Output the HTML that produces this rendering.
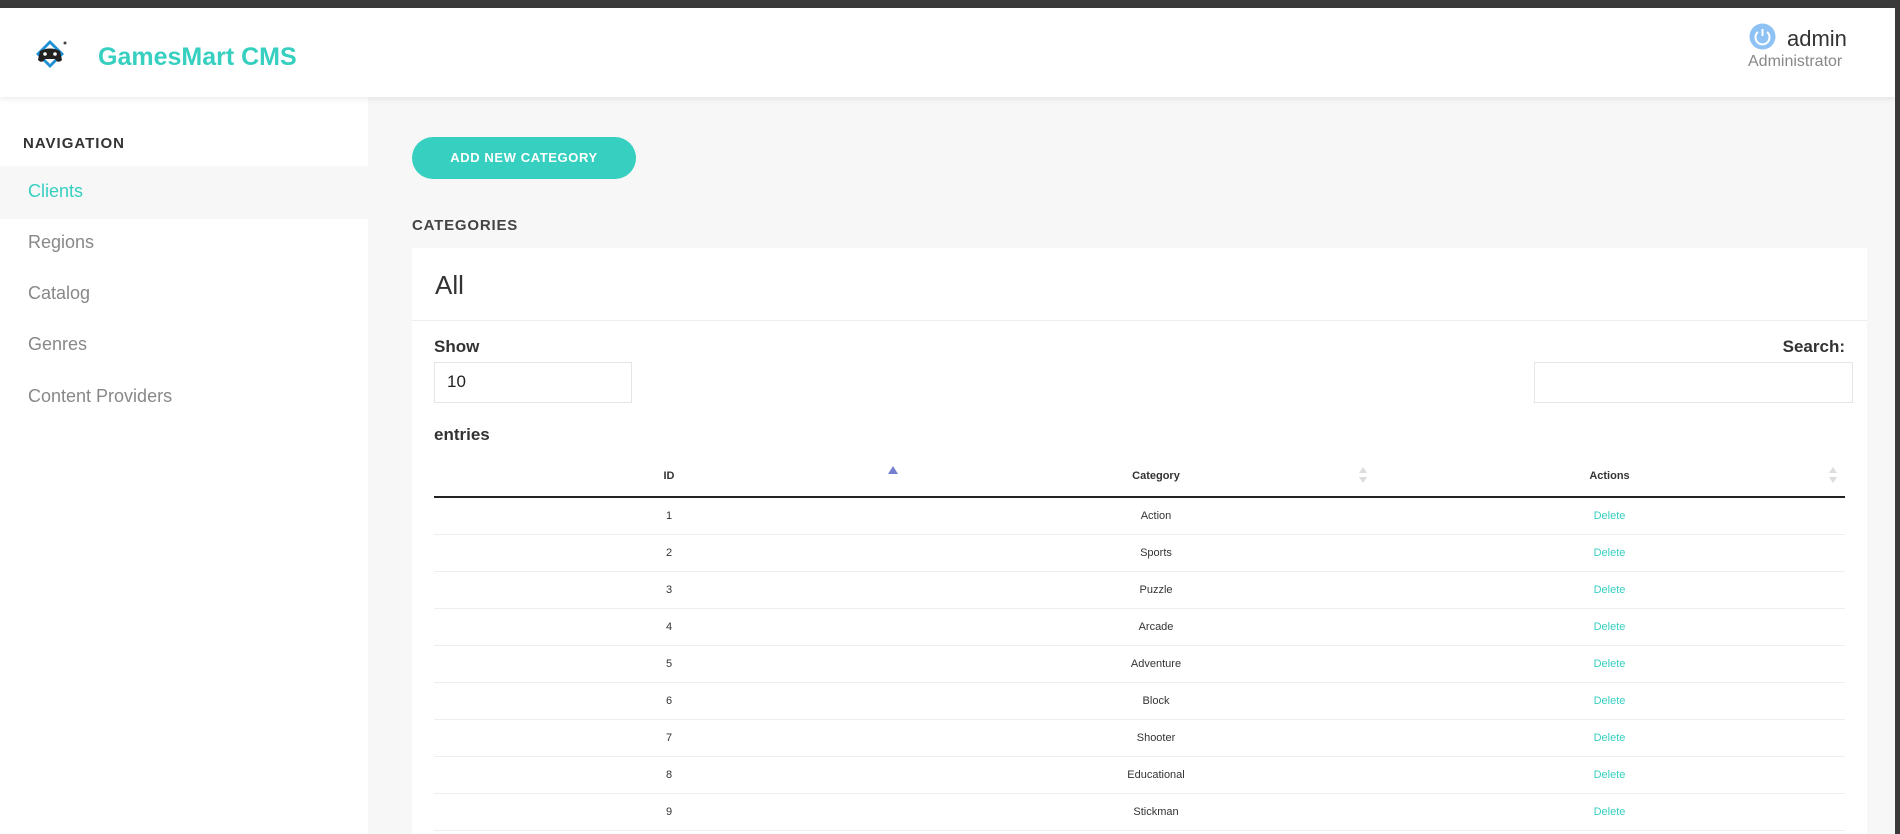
<!DOCTYPE html>
<html style="overflow:hidden;height:834px"><head><meta charset="utf-8"><style>
*{box-sizing:border-box;margin:0;padding:0}
body{width:1900px;height:834px;overflow:hidden;background:#f7f7f7;font-family:"Liberation Sans",Arial,sans-serif;position:relative}
.topbar{position:absolute;left:0;top:0;width:1900px;height:8px;background:#3a3a3a}
.rstrip{position:absolute;right:0;top:0;width:5px;height:834px;background:#3a3a3a;z-index:5}
.header{position:absolute;left:0;top:8px;width:1895px;height:89px;background:#fff;box-shadow:0 2px 6px rgba(0,0,0,.08);z-index:2}
.title{position:absolute;left:98px;top:35px;font-size:25px;font-weight:bold;color:#36cfc0}
.side{position:absolute;left:0;top:97px;width:368px;height:737px;background:#fff}
.nav{position:absolute;left:23px;top:135px;font-size:15px;font-weight:bold;letter-spacing:1px;color:#333}
.item{position:absolute;left:28px;font-size:18px;color:#888}
.btn{position:absolute;left:412px;top:137px;width:224px;height:42px;border-radius:21px;background:#36cfc0;color:#fff;font-size:13px;font-weight:bold;letter-spacing:.6px;text-align:center;line-height:42px}
.card{position:absolute;left:412px;top:248px;width:1455px;height:600px;background:#fff}
table{position:absolute;left:434px;top:456px;width:1411px;border-collapse:collapse;font-size:11px;color:#333;table-layout:fixed}
th{height:41px;border-bottom:2px solid #222;font-weight:bold}
td{height:37px;border-bottom:1px solid #eee;text-align:center}
.a{padding-right:34px}
td.d{color:#36cfc0}
.inp{position:absolute;border:1px solid #e5e5e5;background:#fff}
</style></head><body>
<div class="topbar"></div>
<div class="header">
<svg style="position:absolute;left:35px;top:30px" width="34" height="34" viewBox="0 0 34 34"><path d="M15 2 L29 16 L15 30 L1 16Z" fill="#1f8fd6"/><path d="M15 6 L25 16 L15 26 L5 16Z" fill="#fff"/><path d="M5 13 Q15 8 25 13 L27 22 Q23 26 20 21 L10 21 Q7 26 3 22Z" fill="#222"/><circle cx="10" cy="16" r="1.8" fill="#fff"/><circle cx="20" cy="16" r="1.8" fill="#fff"/><circle cx="30" cy="5" r="1.5" fill="#444"/></svg>
<div class="title">GamesMart CMS</div>
<svg style="position:absolute;left:1749px;top:15px" width="27" height="27" viewBox="0 0 27 27"><circle cx="13.5" cy="13.5" r="13" fill="#8ec2f5"/><path d="M9 9 A7 7 0 1 0 18 9" stroke="#fff" stroke-width="2" fill="none"/><line x1="13.5" y1="6" x2="13.5" y2="13" stroke="#fff" stroke-width="2"/></svg>
<div style="position:absolute;left:1787px;top:18px;font-size:22px;color:#333">admin</div>
<div style="position:absolute;left:1748px;top:45px;font-size:16px;color:#888">Administrator</div>
</div>
<div class="rstrip"></div>
<div class="side">
<div style="position:absolute;left:0;top:69px;width:368px;height:53px;background:#f7f7f7"></div>
</div>
<div class="nav">NAVIGATION</div>
<div class="item" style="top:181px;color:#36cfc0">Clients</div>
<div class="item" style="top:232px">Regions</div>
<div class="item" style="top:283px">Catalog</div>
<div class="item" style="top:334px">Genres</div>
<div class="item" style="top:386px">Content Providers</div>
<div class="btn">ADD NEW CATEGORY</div>
<div style="position:absolute;left:412px;top:217px;font-size:15px;font-weight:bold;letter-spacing:.8px;color:#444">CATEGORIES</div>
<div class="card">
<div style="position:absolute;left:23px;top:22px;font-size:26px;color:#333">All</div>
<div style="position:absolute;left:0;top:72px;width:1455px;border-top:1px solid #eee"></div>
<div style="position:absolute;left:22px;top:89px;font-size:17px;font-weight:bold;color:#333">Show</div>
<div style="position:absolute;right:22px;top:89px;font-size:17px;font-weight:bold;color:#333">Search:</div>
<div style="position:absolute;left:22px;top:177px;font-size:17px;font-weight:bold;color:#333">entries</div>
</div>
<div class="inp" style="left:434px;top:362px;width:198px;height:41px;font-size:17px;padding:9px 12px;color:#222">10</div>
<div class="inp" style="left:1534px;top:362px;width:319px;height:41px"></div>
<table>
<colgroup><col style="width:470px"><col style="width:504px"><col style="width:437px"></colgroup>
<tr><th>ID</th><th>Category</th><th class="a">Actions</th></tr>
<tr><td>1</td><td>Action</td><td class="d a">Delete</td></tr>
<tr><td>2</td><td>Sports</td><td class="d a">Delete</td></tr>
<tr><td>3</td><td>Puzzle</td><td class="d a">Delete</td></tr>
<tr><td>4</td><td>Arcade</td><td class="d a">Delete</td></tr>
<tr><td>5</td><td>Adventure</td><td class="d a">Delete</td></tr>
<tr><td>6</td><td>Block</td><td class="d a">Delete</td></tr>
<tr><td>7</td><td>Shooter</td><td class="d a">Delete</td></tr>
<tr><td>8</td><td>Educational</td><td class="d a">Delete</td></tr>
<tr><td>9</td><td>Stickman</td><td class="d a">Delete</td></tr>
</table>
<svg style="position:absolute;left:888px;top:466px" width="10" height="8"><path d="M5 0 L10 8 L0 8Z" fill="#7480d0"/></svg>
<svg style="position:absolute;left:1358px;top:467px" width="10" height="16"><path d="M5 0 L9 6 L1 6Z M5 16 L9 10 L1 10Z" fill="#ddd"/></svg>
<svg style="position:absolute;left:1828px;top:467px" width="10" height="16"><path d="M5 0 L9 6 L1 6Z M5 16 L9 10 L1 10Z" fill="#ddd"/></svg>
</body></html>
